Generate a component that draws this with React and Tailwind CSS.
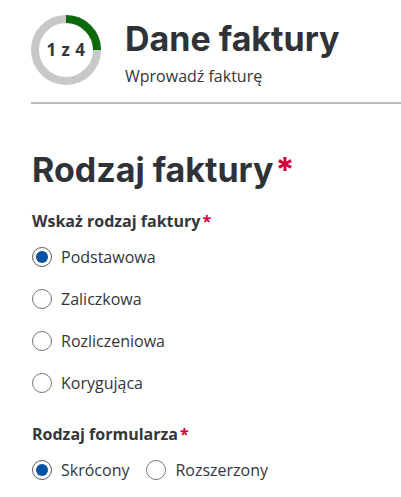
import React, { useState } from 'react';

const Radio = ({ checked, label, onClick }) => (
  <button type="button" onClick={onClick} className="flex items-center gap-[9px] text-left">
    <span
      className={`w-[20px] h-[20px] rounded-full flex items-center justify-center bg-white ${
        checked ? 'border-[1.5px] border-[#5a5a5a]' : 'border border-[#767676]'
      }`}
    >
      {checked && <span className="w-[12px] h-[12px] rounded-full bg-[#0052a5]" />}
    </span>
    <span className="text-[16px] leading-[24px] text-[#33363b]">{label}</span>
  </button>
);

const Star = () => <span className="text-[#d6003a] ml-[2px]">*</span>;

const App = () => {
  const [type, setType] = useState('Podstawowa');
  const [form, setForm] = useState('Skrócony');
  const types = ['Podstawowa', 'Zaliczkowa', 'Rozliczeniowa', 'Korygująca'];

  return (
    <div className="w-[401px] h-[497px] bg-white overflow-hidden" style={{ fontFamily: '"Open Sans", sans-serif' }}>
      {/* Header */}
      <div className="pl-[31px] pt-[15px]">
        <div className="flex items-start gap-[24px]">
          <div className="relative w-[70px] h-[70px] shrink-0">
            <svg width="70" height="70" viewBox="0 0 70 70">
              <circle cx="35" cy="35" r="31" fill="none" stroke="#c8c8c8" strokeWidth="8" />
              <path d="M35 4 A31 31 0 0 1 66 35" fill="none" stroke="#0b6b0b" strokeWidth="8" />
            </svg>
            <span className="absolute inset-0 flex items-center justify-center text-[17px] font-bold tracking-[0.5px] text-[#33363b]">
              1 z 4
            </span>
          </div>
          <div className="pt-[2px]">
            <h1 className="text-[34px] leading-[44px] font-bold text-[#2f3338]" style={{ fontFamily: 'Inter, sans-serif' }}>
              Dane faktury
            </h1>
            <p className="text-[16px] leading-[20px] text-[#33363b] mt-[5px]">Wprowadź fakturę</p>
          </div>
        </div>
        <div className="h-[2px] bg-[#bdbdbd] mt-[16px]" />
      </div>

      {/* Body */}
      <div className="pl-[32px] pt-[44px]">
        <h2 className="text-[34px] leading-[44px] font-bold text-[#2f3338]" style={{ fontFamily: 'Inter, sans-serif' }}>
          Rodzaj faktury<Star />
        </h2>
        <p className="mt-[19px] text-[16px] leading-[20px] font-bold text-[#33363b]">
          Wskaż rodzaj faktury<Star />
        </p>
        <div className="flex flex-col gap-[18px] mt-[14px]">
          {types.map(t => (
            <Radio key={t} label={t} checked={type === t} onClick={() => setType(t)} />
          ))}
        </div>
        <p className="mt-[29px] text-[16px] leading-[20px] font-bold text-[#33363b]">
          Rodzaj formularza<Star />
        </p>
        <div className="flex items-center gap-[17px] mt-[14px]">
          {['Skrócony', 'Rozszerzony'].map(f => (
            <Radio key={f} label={f} checked={form === f} onClick={() => setForm(f)} />
          ))}
        </div>
      </div>
    </div>
  );
};

export default App;
